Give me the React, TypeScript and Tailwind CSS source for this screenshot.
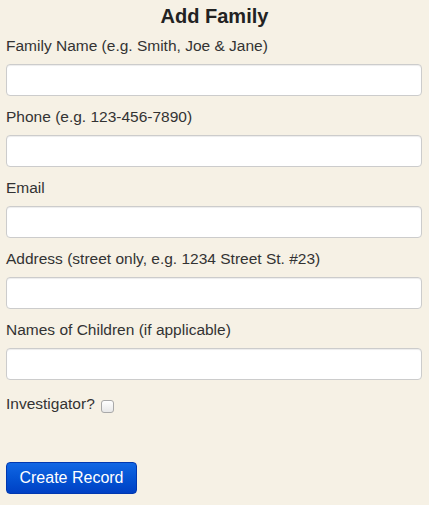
// Formulário "Add Family": campos empilhados com rótulo acima de cada input.
const CAMPOS = [
  "Family Name (e.g. Smith, Joe & Jane)",
  "Phone (e.g. 123-456-7890)",
  "Email",
  "Address (street only, e.g. 1234 Street St. #23)",
  "Names of Children (if applicable)",
];

export default function App() {
  return (
    <div
      className="min-h-screen w-full bg-[#f6f1e5] px-[6px] pt-[4px] text-[#333]"
      style={{ fontFamily: '"Liberation Sans", Arial, sans-serif' }}
    >
      <h1 className="text-center text-[20px] font-bold leading-[24px] text-[#222]">Add Family</h1>
      <div className="mt-[9px] flex w-[416px] flex-col">
        {CAMPOS.map((rotulo) => (
          <label key={rotulo} className="mb-[12px] flex flex-col">
            <span className="text-[15.5px] leading-[18px] text-[#333]">{rotulo}</span>
            <input
              type="text"
              className="mt-[9px] h-[32px] w-full rounded-[4px] border border-[#cccccc] bg-white px-2 text-[14px] shadow-[inset_0_1px_1px_rgba(0,0,0,0.075)] outline-none"
            />
          </label>
        ))}
        <label className="mt-[3px] flex items-center gap-[6px]">
          <span className="text-[15.5px] leading-[18px]">Investigator?</span>
          <input
            type="checkbox"
            className="mt-[5px] h-[13px] w-[13px] appearance-none rounded-[3px] border border-[#a9a9a9] bg-gradient-to-b from-white to-[#e8e8e8]"
          />
        </label>
        <div className="mt-[49px]">
          <button className="h-[32px] w-[131px] rounded-[4px] border border-[#0038b0] bg-gradient-to-b from-[#1167e4] to-[#0040c4] text-[16px] text-white">
            Create Record
          </button>
        </div>
      </div>
    </div>
  );
}
